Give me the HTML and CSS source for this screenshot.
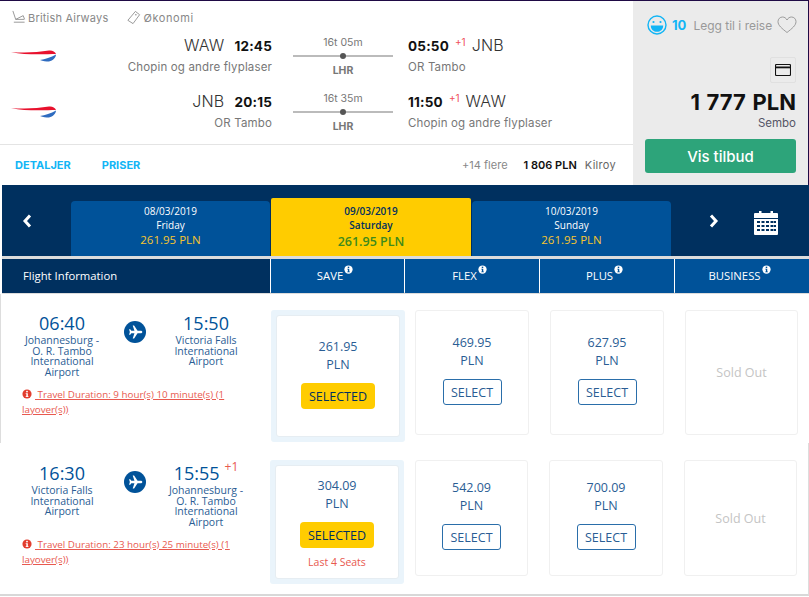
FILE: index.html
```html
<!DOCTYPE html>
<html lang="en">
<head>
    <meta charset="UTF-8">
    <meta name="viewport" content="width=device-width, initial-scale=1.0">
    <title>Flight offers</title>
    <link rel="stylesheet" href="styles.css">
</head>
<body>
    <svg class="sprite" width="0" height="0">
        <symbol id="ba" viewBox="0 0 46 14">
            <path d="M0 3 C12 4 26 3.6 38 1.6 C41 1.2 44 2.4 45 5 C36 5 16 6.6 0 3 Z" fill="#e8112d"/>
            <path d="M29 11 C34 10.4 40 8.4 45 5.6 C45 8.6 42 11.6 38 12.6 C35 12.6 32 12 29 11 Z" fill="#2f6cc0"/>
        </symbol>
        <symbol id="info" viewBox="0 0 12 12">
            <circle cx="6" cy="6" r="5.5"/>
            <rect x="5" y="2.2" width="2" height="1.8" fill="var(--dot)"/>
            <path d="M4.4 5h2.6v3.6h0.8v1H4.4v-1h0.8V6H4.4z" fill="var(--dot)"/>
        </symbol>
        <symbol id="plane" viewBox="0 0 24 24">
            <circle cx="12" cy="12" r="12" fill="#005299"/>
            <path d="M20 12c0-.9-1-1.4-2-1.4h-3.2L11 5h-1.500l1.900 5.600H8L6.800 9H5.500l.9 3-.9 3h1.300L8 13.400h3.400L9.500 19H11l3.800-5.600H18c1 0 2-.5 2-1.400z" fill="#fff"/>
        </symbol>
    </svg>

    <section class="offer">
        <div class="offer-main">
            <div class="meta">
                <span class="meta-item">
                    <svg class="meta-icon" viewBox="0 0 16 16"><path d="M2 1l3 9h9M3 13h11.500M5 10l8-4 1.500 4" fill="none" stroke="#888" stroke-width="0.9"/></svg>
                    British Airways
                </span>
                <span class="meta-item">
                    <svg class="meta-icon" viewBox="0 0 16 16"><path d="M10 1.500l4.500 3.500-7 9.500L2 11z" fill="none" stroke="#888" stroke-width="0.9"/><circle cx="10.500" cy="5" r="0.800" fill="#888"/></svg>
                    Økonomi
                </span>
            </div>

            <div class="leg">
                <svg class="ba-logo"><use href="#ba"/></svg>
                <div class="end end-dep">
                    <div class="end-line"><span class="code">WAW</span><b class="clock">12:45</b></div>
                    <div class="port">Chopin og andre flyplaser</div>
                </div>
                <div class="route">
                    <div class="route-time">16t 05m</div>
                    <div class="route-line"></div>
                    <div class="route-stop">LHR</div>
                </div>
                <div class="end">
                    <div class="end-line"><b class="clock">05:50</b><sup class="plus">+1</sup><span class="code">JNB</span></div>
                    <div class="port">OR Tambo</div>
                </div>
            </div>

            <div class="leg">
                <svg class="ba-logo"><use href="#ba"/></svg>
                <div class="end end-dep">
                    <div class="end-line"><span class="code">JNB</span><b class="clock">20:15</b></div>
                    <div class="port">OR Tambo</div>
                </div>
                <div class="route">
                    <div class="route-time">16t 35m</div>
                    <div class="route-line"></div>
                    <div class="route-stop">LHR</div>
                </div>
                <div class="end">
                    <div class="end-line"><b class="clock">11:50</b><sup class="plus">+1</sup><span class="code">WAW</span></div>
                    <div class="port">Chopin og andre flyplaser</div>
                </div>
            </div>

            <div class="offer-foot">
                <a class="foot-link" href="#">DETALJER</a>
                <a class="foot-link" href="#">PRISER</a>
                <span class="more">+14 flere</span>
                <b class="more-price">1 806 PLN</b>
                <span class="more-seller">Kilroy</span>
            </div>
        </div>

        <aside class="offer-side">
            <div class="side-top">
                <svg class="smile" viewBox="0 0 20 20"><circle cx="10" cy="10" r="9" fill="none" stroke="#12b5f5" stroke-width="1.400"/><circle cx="6.500" cy="7" r="1.100" fill="#12b5f5"/><circle cx="13.500" cy="7" r="1.100" fill="#12b5f5"/><path d="M3.800 10.500h12.400c0 4-2.800 6.300-6.200 6.300s-6.200-2.300-6.200-6.300z" fill="#12b5f5"/></svg>
                <b class="score">10</b>
                <span class="trip">Legg til i reise</span>
                <svg class="heart" viewBox="0 0 20 18"><path d="M10 16.500C5 12.500 1 9.500 1 5.600 1 3 3 1 5.500 1 7.500 1 9 2.100 10 4c1-1.900 2.500-3 4.500-3C17 1 19 3 19 5.600c0 3.900-4 6.900-9 10.900z" fill="none" stroke="#888" stroke-width="0.800"/></svg>
            </div>
            <div class="card-badge">
                <svg class="card-icon" viewBox="0 0 16 12"><rect x="0.500" y="0.500" width="15" height="11" rx="1" fill="none" stroke="#111" stroke-width="1.100"/><rect x="1" y="2.500" width="14" height="1.800" fill="#111"/></svg>
            </div>
            <div class="total">1 777 PLN</div>
            <div class="seller">Sembo</div>
            <a class="deal" href="#">Vis tilbud</a>
        </aside>
    </section>

    <nav class="dates">
        <svg class="chevron chevron-left" viewBox="0 0 10 14"><path d="M8 1.500L3 7l5 5.500" fill="none" stroke="#fff" stroke-width="3"/></svg>
        <div class="date-tab">
            <div>08/03/2019</div>
            <div>Friday</div>
            <div class="date-price">261.95 PLN</div>
        </div>
        <div class="date-tab date-active">
            <div>09/03/2019</div>
            <div>Saturday</div>
            <div class="date-price">261.95 PLN</div>
        </div>
        <div class="date-tab">
            <div>10/03/2019</div>
            <div>Sunday</div>
            <div class="date-price">261.95 PLN</div>
        </div>
        <svg class="chevron chevron-right" viewBox="0 0 10 14"><path d="M2 1.500L7 7l-5 5.500" fill="none" stroke="#fff" stroke-width="3"/></svg>
        <svg class="calendar" viewBox="0 0 24 25">
            <path d="M1 3h4V1h2.500v2h9V1H19v2h4a1 1 0 0 1 1 1v4H0V4a1 1 0 0 1 1-1z" fill="#fff"/>
            <path d="M0 9h24v15a1 1 0 0 1-1 1H1a1 1 0 0 1-1-1z" fill="#fff"/>
            <path d="M3 11h3v2H3zM7.500 11h3v2h-3zM12 11h3v2h-3zM16.500 11h3v2h-3zM20 11h2v2h-2zM3 15h3v2H3zM7.500 15h3v2h-3zM12 15h3v2h-3zM16.500 15h3v2h-3zM20 15h2v2h-2zM3 19h3v2H3zM7.500 19h3v2h-3zM12 19h3v2h-3zM16.500 19h3v2h-3zM20 19h2v2h-2z" fill="#00305f"/>
        </svg>
    </nav>

    <div class="fare-head">
        <div class="head-info">Flight Information</div>
        <div class="head-cell">SAVE<svg class="info-sup"><use href="#info"/></svg></div>
        <div class="head-cell">FLEX<svg class="info-sup"><use href="#info"/></svg></div>
        <div class="head-cell">PLUS<svg class="info-sup"><use href="#info"/></svg></div>
        <div class="head-cell">BUSINESS<svg class="info-sup"><use href="#info"/></svg></div>
    </div>

    <div class="fare-row fare-row-first">
        <div class="flight">
            <div class="flight-ends">
                <div class="stop">
                    <div class="stop-time">06:40</div>
                    <div class="stop-name">Johannesburg - O. R. Tambo International Airport</div>
                </div>
                <svg class="plane"><use href="#plane"/></svg>
                <div class="stop">
                    <div class="stop-time">15:50</div>
                    <div class="stop-name">Victoria Falls International Airport</div>
                </div>
            </div>
            <div class="duration"><svg class="info-alert"><use href="#info"/></svg><a href="#">&nbsp;Travel Duration: 9 hour(s) 10 minute(s) (1 layover(s))</a></div>
        </div>
        <div class="fare fare-selected">
            <div class="fare-box">
                <div class="fare-amount">261.95</div>
                <div class="fare-currency">PLN</div>
                <button class="btn-selected">SELECTED</button>
            </div>
        </div>
        <div class="fare">
            <div class="fare-box">
                <div class="fare-amount">469.95</div>
                <div class="fare-currency">PLN</div>
                <button class="btn-select">SELECT</button>
            </div>
        </div>
        <div class="fare">
            <div class="fare-box">
                <div class="fare-amount">627.95</div>
                <div class="fare-currency">PLN</div>
                <button class="btn-select">SELECT</button>
            </div>
        </div>
        <div class="fare">
            <div class="fare-box sold">Sold Out</div>
        </div>
    </div>

    <div class="fare-row fare-row-second">
        <div class="flight">
            <div class="flight-ends">
                <div class="stop">
                    <div class="stop-time">16:30</div>
                    <div class="stop-name">Victoria Falls International Airport</div>
                </div>
                <svg class="plane"><use href="#plane"/></svg>
                <div class="stop">
                    <div class="stop-time">15:55<sup class="next-day">+1</sup></div>
                    <div class="stop-name">Johannesburg - O. R. Tambo International Airport</div>
                </div>
            </div>
            <div class="duration"><svg class="info-alert"><use href="#info"/></svg><a href="#">&nbsp;Travel Duration: 23 hour(s) 25 minute(s) (1 layover(s))</a></div>
        </div>
        <div class="fare fare-selected">
            <div class="fare-box">
                <div class="fare-amount">304.09</div>
                <div class="fare-currency">PLN</div>
                <button class="btn-selected">SELECTED</button>
                <div class="seats">Last 4 Seats</div>
            </div>
        </div>
        <div class="fare">
            <div class="fare-box">
                <div class="fare-amount">542.09</div>
                <div class="fare-currency">PLN</div>
                <button class="btn-select">SELECT</button>
            </div>
        </div>
        <div class="fare">
            <div class="fare-box">
                <div class="fare-amount">700.09</div>
                <div class="fare-currency">PLN</div>
                <button class="btn-select">SELECT</button>
            </div>
        </div>
        <div class="fare">
            <div class="fare-box sold">Sold Out</div>
        </div>
    </div>
</body>
</html>
```

FILE: styles.css
```css
body {
    margin: 0;
    background-color: #fff;
    font-family: "Open Sans", sans-serif;
    color: #2a5d94;
    overflow: hidden;
}

.sprite {
    display: block;
    height: 0;
}

/* offer card */
.offer {
    display: flex;
    height: 185px;
    box-sizing: border-box;
    border-top: 1px solid #1f0a45;
    border-right: 1px solid #1f0a45;
    font-family: Inter, sans-serif;
    color: #666;
}
.offer-main {
    flex: 1;
    display: flex;
    flex-direction: column;
}
.meta {
    display: flex;
    gap: 18px;
    height: 32px;
    padding: 9px 0 0 11px;
    box-sizing: border-box;
    font-size: 11px;
    letter-spacing: 0.2px;
    color: #888;
}
.meta-item {
    display: flex;
    align-items: flex-start;
    gap: 2px;
    line-height: 16px;
}
.meta-item + .meta-item {
    letter-spacing: 0.6px;
}
.meta-icon {
    width: 15px;
    height: 15px;
}
.leg {
    display: grid;
    grid-template-columns: 12px 260px 136px 1fr;
    height: 56px;
    position: relative;
}
.ba-logo {
    position: absolute;
    left: 11px;
    top: 16px;
    width: 46px;
    height: 14px;
}
.end {
    padding-top: 1px;
    grid-column: 4;
}
.end-dep {
    grid-column: 2;
    text-align: right;
}
.end-line {
    display: flex;
    align-items: baseline;
    gap: 10px;
    height: 22px;
    line-height: 22px;
}
.end-dep .end-line {
    justify-content: flex-end;
}
.code {
    font-size: 16px;
    font-weight: 300;
    color: #333;
    letter-spacing: 0.2px;
}
.clock {
    font-size: 13.5px;
    font-weight: 700;
    color: #111;
    letter-spacing: 0.2px;
}
.plus {
    font-size: 10px;
    color: #f0505a;
    line-height: 10px;
    align-self: flex-start;
    margin: 3px -4px 0 -4px;
    vertical-align: baseline;
}
.port {
    margin-top: 4px;
    font-size: 11.500px;
    line-height: 14px;
    color: #777;
    letter-spacing: 0.15px;
}
.route {
    grid-column: 3;
    margin: 0 15px 0 21px;
    text-align: center;
}
.route-time {
    font-size: 10.500px;
    line-height: 14px;
    padding-top: 3px;
    color: #777;
}
.route-line {
    position: relative;
    height: 2px;
    margin-top: 5px;
    background-color: #bbb;
}
.route-line::after {
    content: "";
    position: absolute;
    left: 47px;
    top: -2px;
    width: 6px;
    height: 6px;
    border-radius: 50%;
    background-color: #555;
}
.route-stop {
    margin-top: 7px;
    font-size: 10.500px;
    font-weight: 700;
    line-height: 14px;
    color: #777;
}
.offer-foot {
    flex: 1;
    margin-top: -1px;
    display: flex;
    align-items: center;
    padding: 0 17px 0 15px;
    border-top: 1px solid #e4e4e4;
    font-size: 11px;
}
.foot-link {
    margin-right: 31px;
    font-weight: 700;
    color: #12b5f5;
    text-decoration: none;
}
.more {
    margin-left: auto;
    color: #888;
}
.more-price {
    margin-left: 16px;
    font-weight: 600;
    color: #111;
}
.more-seller {
    margin-left: 8px;
    color: #666;
    letter-spacing: 0.3px;
}

.offer-side {
    width: 175px;
    box-sizing: border-box;
    padding: 14px 12px 0 14px;
    background-color: #ebebeb;
    display: flex;
    flex-direction: column;
    align-items: flex-end;
}
.side-top {
    display: flex;
    align-items: center;
    align-self: stretch;
    height: 20px;
}
.smile {
    width: 20px;
    height: 20px;
    flex: none;
}
.score {
    margin-left: 5px;
    font-size: 13px;
    color: #12b5f5;
}
.trip {
    margin-left: 7px;
    font-size: 12px;
    color: #999;
    white-space: nowrap;
}
.heart {
    margin-left: 5px;
    width: 20px;
    height: 18px;
    flex: none;
}
.card-badge {
    margin-top: 22px;
    width: 24px;
    height: 24px;
    border: 1px solid #e0e0e0;
    border-radius: 2px;
    display: flex;
    align-items: center;
    justify-content: center;
}
.card-icon {
    width: 16px;
    height: 12px;
}
.total {
    margin-top: 6px;
    font-size: 22px;
    font-weight: 700;
    line-height: 26px;
    color: #111;
    white-space: nowrap;
    word-spacing: 1.500px;
}
.seller {
    margin-top: 1px;
    font-size: 11.500px;
    line-height: 14px;
    color: #556;
}
.deal {
    margin-top: 9px;
    width: 151px;
    height: 34px;
    line-height: 35px;
    border-radius: 3px;
    background-color: #2da47a;
    color: #fff;
    font-size: 15px;
    font-weight: 500;
    text-align: center;
    text-decoration: none;
}

/* date strip */
.dates {
    display: flex;
    align-items: flex-end;
    height: 71px;
    margin-left: 2px;
    background-color: #00305f;
    position: relative;
}
.chevron {
    position: absolute;
    top: 29px;
    width: 10px;
    height: 14px;
}
.chevron-left {
    left: 20px;
}
.chevron-right {
    left: 707px;
}
.calendar {
    position: absolute;
    left: 752px;
    top: 25px;
    width: 24px;
    height: 25px;
}
.date-tab {
    width: 199px;
    height: 55px;
    margin-right: 1px;
    box-sizing: border-box;
    padding-top: 3px;
    border-radius: 4px 4px 0 0;
    background-color: #005299;
    color: #fff;
    font-size: 10px;
    line-height: 14px;
    text-align: center;
}
.date-tab:first-of-type {
    margin-left: 69px;
}
.date-active {
    width: 200px;
    height: 58px;
    padding-top: 6px;
    background-color: #ffcc00;
    color: #00305f;
    font-weight: 600;
    border-radius: 2px 2px 0 0;
}
.date-price {
    font-size: 11.500px;
    line-height: 16px;
    color: #f7c52e;
}
.date-active .date-price {
    margin-top: 2px;
    font-size: 12.500px;
    color: #3d8a1c;
}

/* fare table */
.fare-head {
    display: grid;
    grid-template-columns: 268px 133px 134px 134px 1fr;
    gap: 1px;
    height: 38px;
    box-sizing: border-box;
    margin-left: 2px;
    border-top: 3px solid #dcdcdc;
    border-bottom: 2px solid #dcdcdc;
    color: #fff;
    font-size: 11.300px;
    line-height: 34px;
}
.head-info {
    padding-left: 21px;
    background-color: #00305f;
}
.head-cell {
    padding-right: 5px;
    background-color: #005299;
    text-align: center;
    white-space: nowrap;
}
.info-sup {
    --dot: #005299;
    fill: #fff;
    width: 9px;
    height: 9px;
    margin-left: 1px;
    vertical-align: 6px;
}

.fare-row {
    display: grid;
    box-sizing: border-box;
}
.fare-row-first {
    grid-template-columns: 270px 134px 135px 135px 1fr;
    height: 149px;
    border-left: 1px solid #ddd;
    padding-top: 16px;
}
.fare-row-second {
    grid-template-columns: 270px 135px 134px 135px 1fr;
    height: 153px;
    border-right: 1px solid #ddd;
    border-bottom: 2px solid #d8d8d8;
    padding-top: 17px;
}
.flight {
    padding-left: 3px;
}
.fare-row-first .flight {
    padding-left: 2px;
    margin-top: 1px;
}
.fare-row-second .flight {
    margin-top: 1px;
}
.flight-ends {
    display: grid;
    grid-template-columns: 118px 26px 118px;
    text-align: center;
}
.stop-time {
    font-size: 18px;
    line-height: 24px;
    color: #005299;
}
.next-day {
    margin-left: 5px;
    font-size: 12px;
    line-height: 0;
    vertical-align: 9px;
    color: #e8594f;
}
.stop-name {
    padding: 0 17px;
    font-size: 10.500px;
    line-height: 10.500px;
    color: #2a5d94;
}
.plane {
    width: 22px;
    height: 22px;
    margin: 10px 0 0 3px;
}
.duration {
    margin: 10px 36px 0 19px;
    font-size: 9.800px;
    line-height: 15px;
    color: #e8594f;
}
.duration a {
    color: #e8594f;
}
.info-alert {
    --dot: #fff;
    fill: #e23d2e;
    width: 10px;
    height: 10px;
    margin-right: 3px;
    vertical-align: -1px;
}

.fare {
    padding: 0 11px 8px 10px;
}
.fare-row-second .fare {
    padding-bottom: 18px;
}
.fare-box {
    height: 100%;
    box-sizing: border-box;
    padding-top: 23px;
    border: 1px solid #f0f0f0;
    border-radius: 3px;
    background-color: #fff;
    text-align: center;
}
.fare-row-second .fare-box {
    padding-top: 18px;
}
.fare-row .fare-selected {
    padding: 5px;
    border-radius: 3px;
    background-color: #eaf4fb;
    margin-bottom: 1px;
}
.fare-row-second .fare-selected {
    margin: 0 1px 10px 0;
}
.fare-selected .fare-box {
    border-color: #e6edf2;
    padding-top: 22px;
}
.fare-row-second .fare-selected .fare-box {
    padding-top: 11px;
}
.fare-amount {
    font-size: 12.500px;
    line-height: 18px;
}
.fare-currency {
    font-size: 12.500px;
    line-height: 18px;
}
.btn-selected {
    margin-top: 9px;
    width: 74px;
    height: 26px;
    padding: 0;
    border: none;
    border-radius: 4px;
    background-color: #ffcc00;
    color: #00305f;
    font-family: "Open Sans", sans-serif;
    font-size: 12.500px;
}
.btn-select {
    margin-top: 9px;
    width: 59px;
    height: 26px;
    padding: 0;
    border: 1px solid #2a6eaa;
    border-radius: 3px;
    background-color: #fff;
    color: #2a5d94;
    font-family: "Open Sans", sans-serif;
    font-size: 12.500px;
}
.seats {
    margin-top: 7px;
    font-size: 10.500px;
    line-height: 14px;
    color: #e8594f;
}
.fare-row .sold {
    display: flex;
    align-items: center;
    justify-content: center;
    padding: 0;
    color: #c4c4c4;
    font-size: 12.500px;
}
```
